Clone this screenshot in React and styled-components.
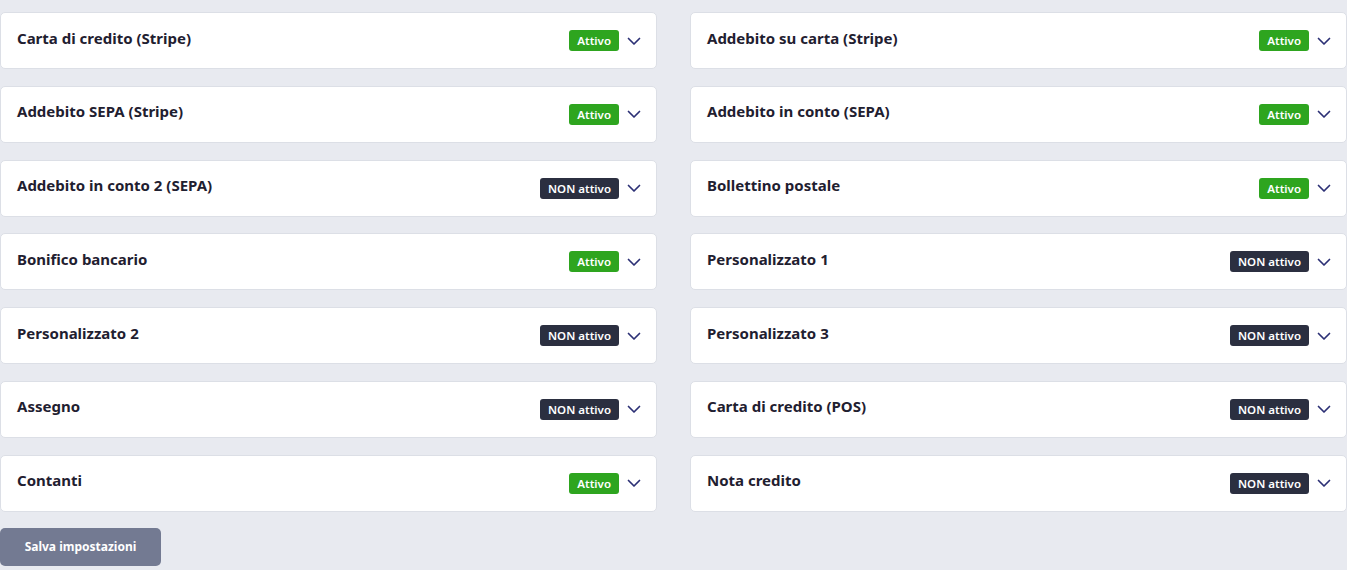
import React from 'react'
import styled, { createGlobalStyle } from 'styled-components'

const GlobalStyle = createGlobalStyle`
  html, body {
    margin: 0;
    padding: 0;
    background: #e8eaf0;
    font-family: "Noto Sans", "Open Sans", sans-serif;
  }
`

const Page = styled.div`
  padding: 12px 0 0 0;
`

const Grid = styled.div`
  display: grid;
  grid-template-columns: 657px 657px;
  column-gap: 33px;
  row-gap: 16.8px;
`

const Card = styled.div`
  box-sizing: border-box;
  height: 57px;
  background: #fff;
  border: 1px solid #dcdfe6;
  border-radius: 5px;
  display: flex;
  align-items: center;
  padding: 0 15px 0 16px;
`

const Title = styled.div`
  flex: 1;
  font-size: 15px;
  font-weight: 700;
  color: #1f2030;
  margin-top: -6px;
`

const Badge = styled.span`
  display: inline-block;
  height: 21px;
  line-height: 21px;
  padding: 0 8px;
  border-radius: 3px;
  font-size: 11.5px;
  font-weight: 600;
  color: #fff;
  background: ${p => (p.active ? '#2ea51f' : '#2b2f40')};
`

const Chevron = styled.svg`
  width: 14px;
  height: 14px;
  margin-left: 8px;
  color: #2c3075;
`

const SaveButton = styled.button`
  margin-top: 16px;
  width: 161px;
  height: 38px;
  border: none;
  border-radius: 5px;
  background: #737a92;
  color: #fff;
  font-family: "Noto Sans", sans-serif;
  font-size: 12px;
  font-weight: 700;
  cursor: pointer;
`

const methods = [
  ['Carta di credito (Stripe)', true],
  ['Addebito su carta (Stripe)', true],
  ['Addebito SEPA (Stripe)', true],
  ['Addebito in conto (SEPA)', true],
  ['Addebito in conto 2 (SEPA)', false],
  ['Bollettino postale', true],
  ['Bonifico bancario', true],
  ['Personalizzato 1', false],
  ['Personalizzato 2', false],
  ['Personalizzato 3', false],
  ['Assegno', false],
  ['Carta di credito (POS)', false],
  ['Contanti', true],
  ['Nota credito', false],
]

function MethodCard({ name, active }) {
  return (
    <Card>
      <Title>{name}</Title>
      <Badge active={active}>{active ? 'Attivo' : 'NON attivo'}</Badge>
      <Chevron viewBox="0 0 14 14" fill="none" stroke="currentColor" strokeWidth="1.7" strokeLinecap="round" strokeLinejoin="round">
        <path d="M1.5 4.5 L7 10 L12.5 4.5" />
      </Chevron>
    </Card>
  )
}

export default function App() {
  return (
    <Page>
      <GlobalStyle />
      <Grid>
        {methods.map(([name, active]) => (
          <MethodCard key={name} name={name} active={active} />
        ))}
      </Grid>
      <SaveButton>Salva impostazioni</SaveButton>
    </Page>
  )
}
